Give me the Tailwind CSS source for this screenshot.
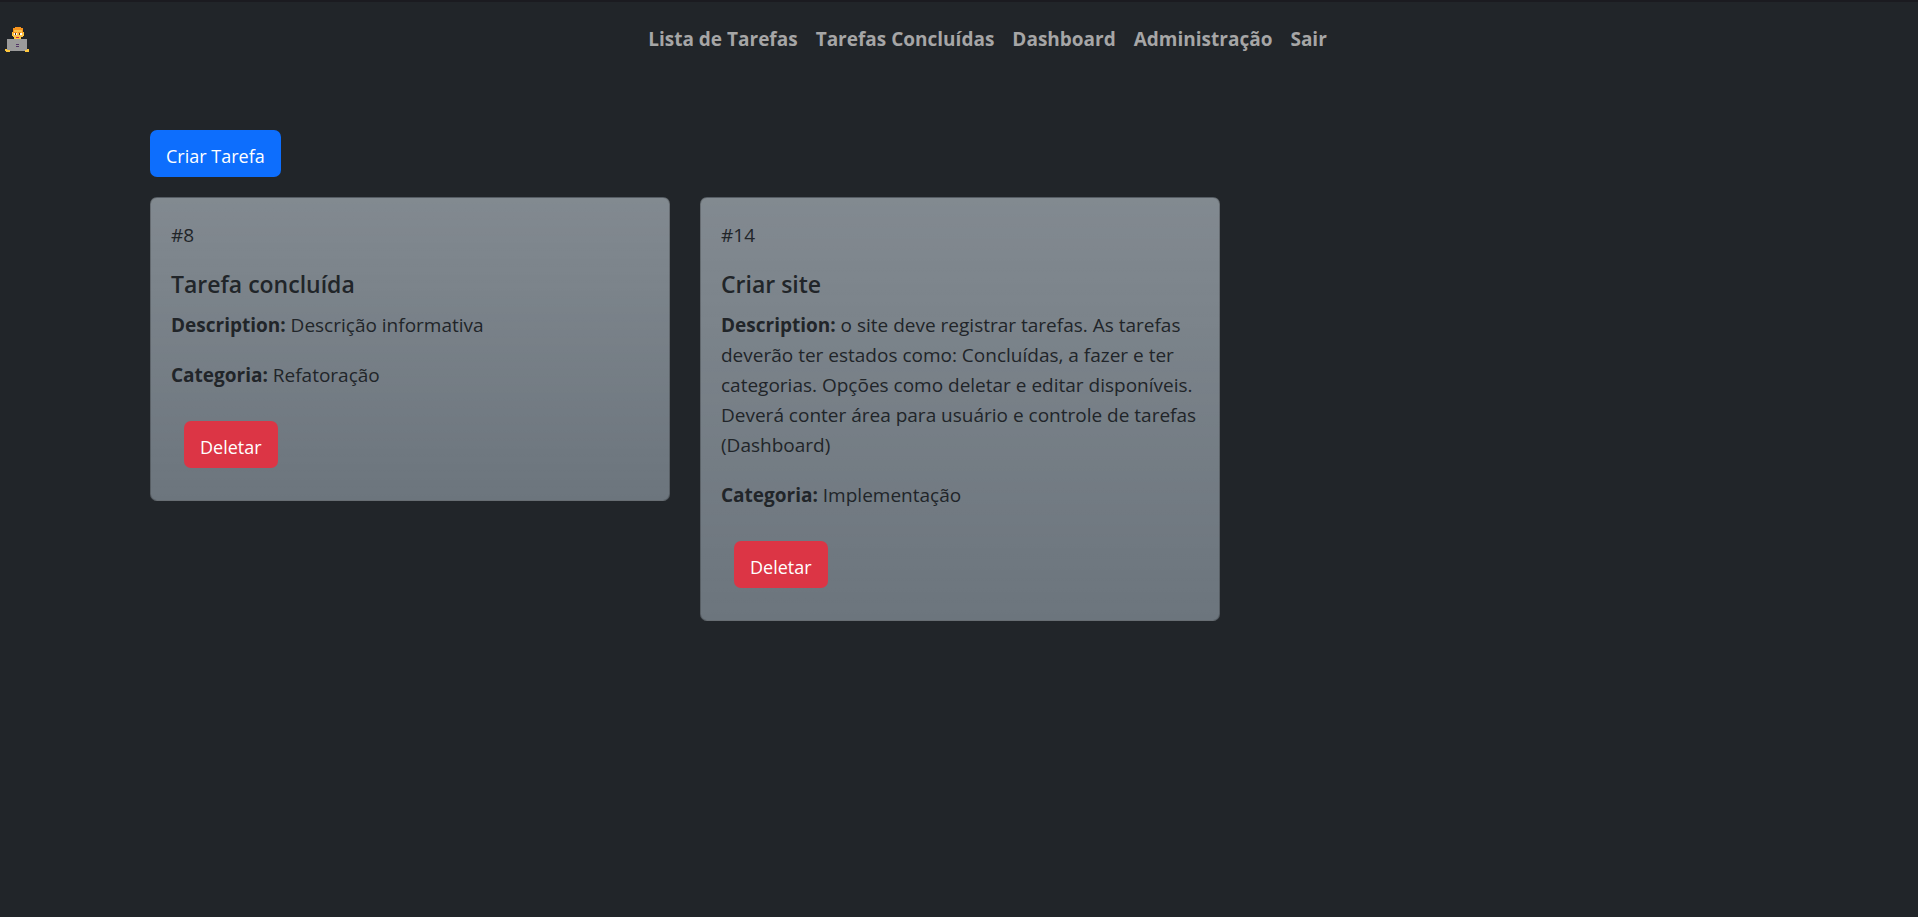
<!DOCTYPE html>
<html lang="pt-BR">
<head>
<meta charset="utf-8">
<meta name="viewport" content="width=device-width, initial-scale=1">
<title>Tarefas Concluídas</title>
<script src="https://cdn.jsdelivr.net/npm/@tailwindcss/browser@4"></script>
</head>
<body class="min-h-screen border-t-2 border-[#1b1b20] bg-[#212529] font-['Open_Sans','Noto_Sans',sans-serif] text-[19px] leading-[30px] text-[#212529]">
<header class="flex items-center py-[22px]">
  <a href="#" aria-label="Início" class="ml-[5px] mr-[28px] shrink-0">
    <svg class="block h-[25px] w-6" viewBox="0 0 24 25" shape-rendering="crispEdges" aria-hidden="true">
      <path fill="#fcc24a" d="M8 3h10v7h-2v2h-6v-2H8z"/>
      <path fill="#ffc83d" d="M7 5h1v4H7zM18 5h1v4h-1zM9 10h7v3H9z"/>
      <path fill="#f7941d" d="M10 0h6v1h2v5h-1V3H9v3H8V1h2zM9 5h3v1H9zM13 5h3v1h-3z"/>
      <path fill="#fff" d="M9 6h3v2H9zM14 6h3v2h-3z"/>
      <path fill="#4a3020" d="M10 6h1v2h-1zM14 6h1v2h-1z"/>
      <path fill="#c8264e" d="M11 10h3v1h-3z"/>
      <path fill="#9b9b9b" d="M2 12h20v12H2z"/>
      <path fill="#533566" d="M11 17h3v1h-3zM11 19h3v1h-3z"/>
      <path fill="#ffc83d" d="M0 22h2v1h3v2H1v-1H0zM24 22h-2v1h-2v2h4z"/>
    </svg>
  </a>
  <nav class="flex flex-1 flex-wrap justify-center gap-[18px] font-bold text-[#a6a6a6]">
    <a href="#">Lista de Tarefas</a>
    <a href="#">Tarefas Concluídas</a>
    <a href="#">Dashboard</a>
    <a href="#">Administração</a>
    <a href="#">Sair</a>
  </nav>
</header>
<main class="pt-[54px] pr-[148px] pl-[150px]">
  <button type="button" class="h-[47px] rounded-[7px] bg-[#0d6efd] px-4 pt-1 text-lg/[30px] text-white">Criar Tarefa</button>
  <div class="mt-5 grid grid-cols-3 items-start gap-[30px]">
    <article class="rounded-[7px] border border-black/20 bg-[#6c757d] bg-linear-to-b from-white/15 to-white/0 px-5 pt-[22px] pb-8">
      <p>#8</p>
      <h2 class="mt-[19px] text-[23px]/[30px] font-semibold">Tarefa concluída</h2>
      <p class="mt-[11px]"><strong>Description:</strong> Descrição informativa</p>
      <p class="mt-5"><strong>Categoria:</strong> Refatoração</p>
      <button type="button" class="mt-[31px] ml-[13px] block h-[47px] rounded-[7px] bg-[#dc3545] px-4 pt-1 text-lg/[30px] text-white">Deletar</button>
    </article>
    <article class="rounded-[7px] border border-black/20 bg-[#6c757d] bg-linear-to-b from-white/15 to-white/0 px-5 pt-[22px] pb-8">
      <p>#14</p>
      <h2 class="mt-[19px] text-[23px]/[30px] font-semibold">Criar site</h2>
      <p class="mt-[11px]"><strong>Description:</strong> o site deve registrar tarefas. As tarefas deverão ter estados como: Concluídas, a fazer e ter categorias. Opções como deletar e editar disponíveis. Deverá conter área para usuário e controle de tarefas (Dashboard)</p>
      <p class="mt-5"><strong>Categoria:</strong> Implementação</p>
      <button type="button" class="mt-[31px] ml-[13px] block h-[47px] rounded-[7px] bg-[#dc3545] px-4 pt-1 text-lg/[30px] text-white">Deletar</button>
    </article>
  </div>
</main>
</body>
</html>
